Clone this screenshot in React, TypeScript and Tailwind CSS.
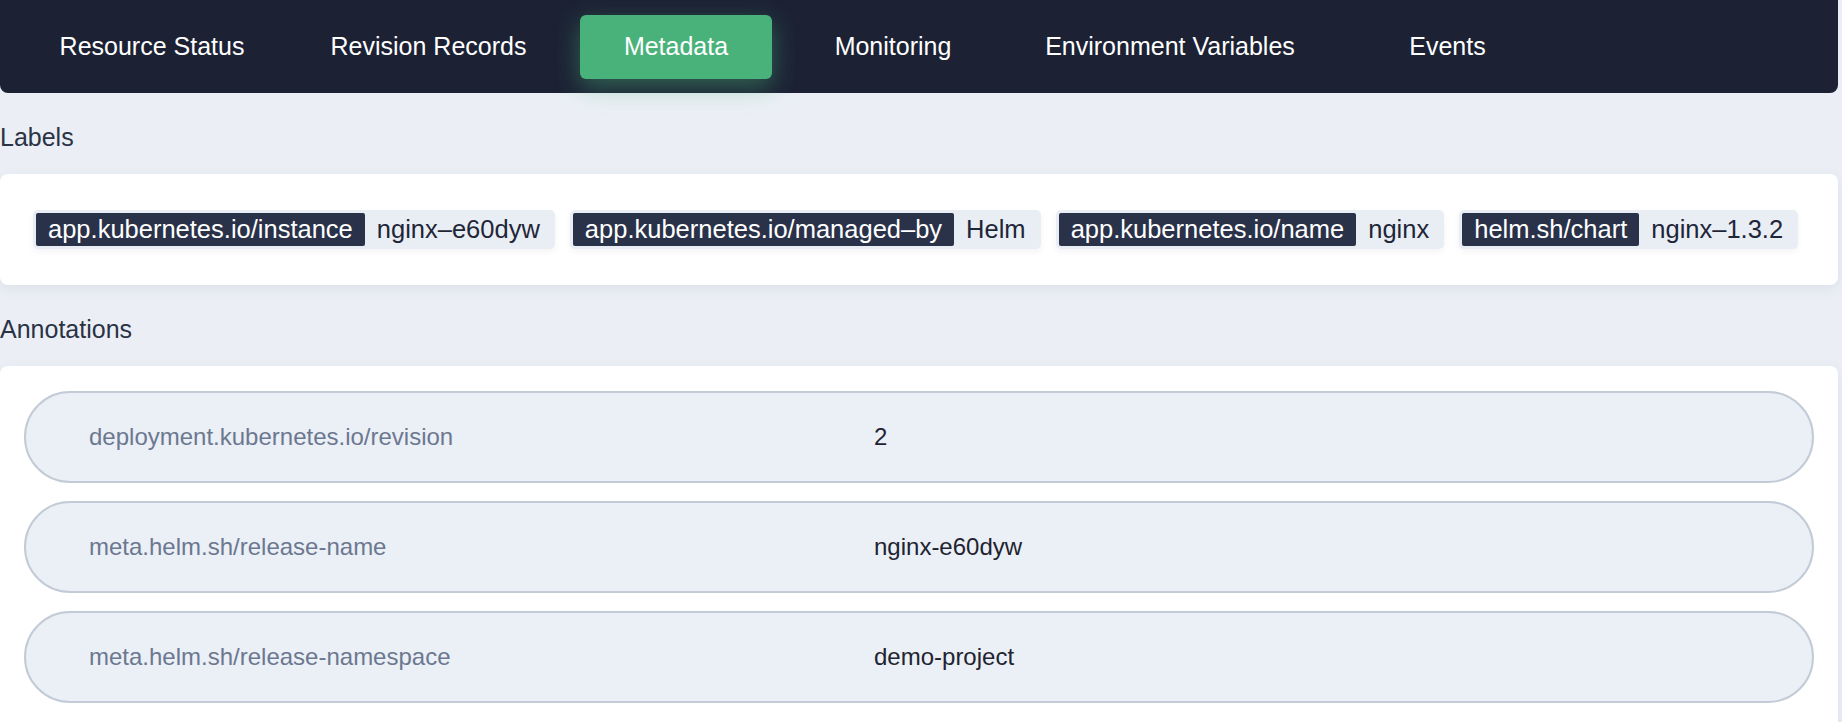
import React from 'react';

const tabs = [
  { label: 'Resource Status', cls: 'w-[272px]' },
  { label: 'Revision Records', cls: 'w-[281px]' },
  { label: 'Metadata', cls: 'ml-[11px] w-[192px]', active: true },
  { label: 'Monitoring', cls: 'w-[242px]' },
  { label: 'Environment Variables', cls: 'w-[312px]' },
  { label: 'Events', cls: 'w-[243px]' },
];

const labels = [
  { k: 'app.kubernetes.io/instance', v: 'nginx–e60dyw' },
  { k: 'app.kubernetes.io/managed–by', v: 'Helm' },
  { k: 'app.kubernetes.io/name', v: 'nginx' },
  { k: 'helm.sh/chart', v: 'nginx–1.3.2' },
];

const annotations = [
  { k: 'deployment.kubernetes.io/revision', v: '2' },
  { k: 'meta.helm.sh/release-name', v: 'nginx-e60dyw' },
  { k: 'meta.helm.sh/release-namespace', v: 'demo-project' },
];

function SectionTitle({ children }: { children: React.ReactNode }) {
  return <div className="pt-[28px] pb-[20px] text-[25px] leading-[33px] text-[#2a3245]">{children}</div>;
}

export default function App() {
  return (
    <div className="min-h-screen bg-[#ebeff5] pr-[4px] font-['Liberation_Sans',Arial,sans-serif]">
      <nav className="flex h-[93px] items-center rounded-b-[8px] bg-[#1c2234] pl-[16px]">
        {tabs.map(t => (
          <div
            key={t.label}
            className={
              t.active
                ? `${t.cls} flex h-[64px] items-center justify-center rounded-[6px] bg-[#49b27a] text-[25px] text-white shadow-[0_8px_24px_rgba(73,178,122,0.45)]`
                : `${t.cls} flex h-[64px] items-center justify-center text-[25px] text-white`
            }
          >
            {t.label}
          </div>
        ))}
      </nav>

      <SectionTitle>Labels</SectionTitle>
      <div className="flex h-[111px] items-center gap-[15px] rounded-[8px] bg-white pl-[33px] shadow-[0_4px_14px_rgba(30,40,70,0.07)]">
        {labels.map(l => (
          <div key={l.k} className="flex items-center rounded-[5px] bg-[#e9eef5] p-[3px] shadow-[0_3px_6px_rgba(30,40,70,0.05)]">
            <span className="rounded-[2px] bg-[#2a3249] px-[12px] text-[25.5px] leading-[33px] text-white">{l.k}</span>
            <span className="px-[12px] text-[25.5px] leading-[33px] text-[#1f2638]">{l.v}</span>
          </div>
        ))}
      </div>

      <SectionTitle>Annotations</SectionTitle>
      <div className="flex flex-col gap-[18px] rounded-t-[8px] bg-white px-[24px] pt-[25px] pb-[24px] shadow-[0_4px_14px_rgba(30,40,70,0.07)]">
        {annotations.map(a => (
          <div
            key={a.k}
            className="grid h-[92px] grid-cols-[785px_1fr] items-center rounded-full border-2 border-[#c3cbd6] bg-[#ebeff6] pl-[63px] text-[24px]"
          >
            <span className="text-[#6b7890]">{a.k}</span>
            <span className="text-[#1f2430]">{a.v}</span>
          </div>
        ))}
      </div>
    </div>
  );
}
